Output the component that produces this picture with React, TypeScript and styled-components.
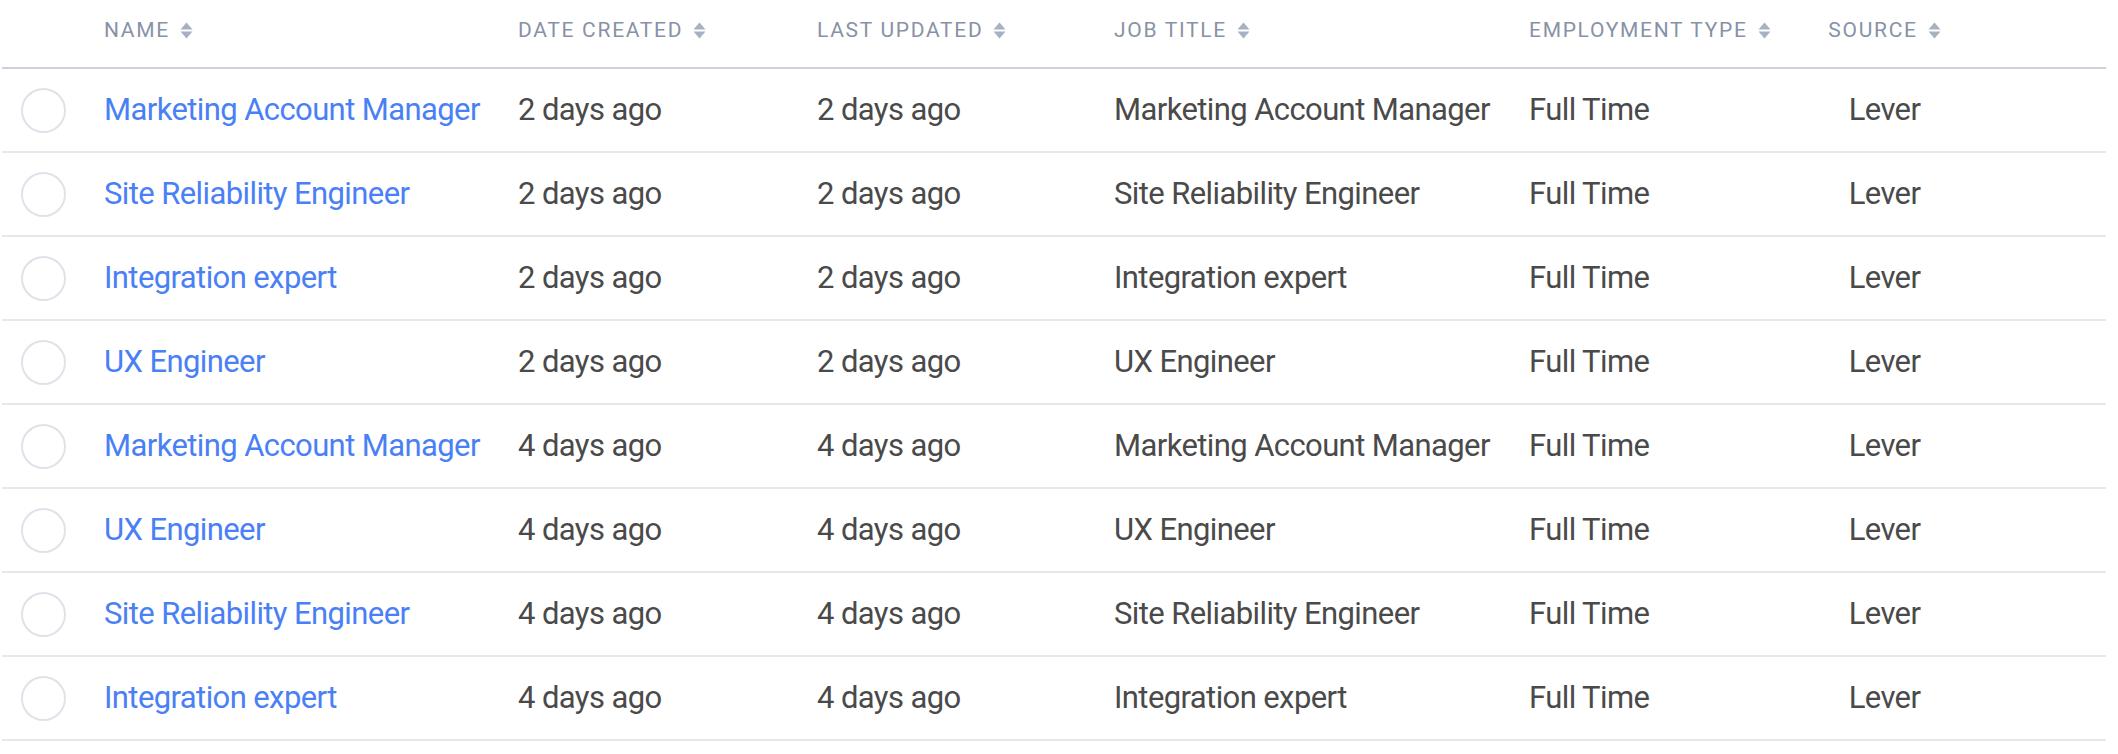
import React from "react";
import styled, { createGlobalStyle } from "styled-components";

const GlobalStyle = createGlobalStyle`
  html, body {
    margin: 0;
    padding: 0;
    background: #ffffff;
  }
  body {
    font-family: Roboto, "Liberation Sans", Arial, sans-serif;
  }
`;

const COLUMNS = "102px 414px 299px 297px 415px 271px 169px 1fr";

const Page = styled.div`
  padding-left: 2px;
  width: 2104px;
`;

const Table = styled.div`
  display: flex;
  flex-direction: column;
  width: 100%;
`;

const HeaderRow = styled.div`
  display: grid;
  grid-template-columns: ${COLUMNS};
  align-items: start;
  padding-top: 18px;
  box-sizing: border-box;
  height: 69px;
  border-bottom: 2px solid #cbd1dd;
`;

const HeadCell = styled.div<{ $center?: boolean }>`
  display: flex;
  align-items: center;
  justify-content: ${(p) => (p.$center ? "center" : "flex-start")};
  gap: 10px;
  font-size: 21px;
  letter-spacing: 1.7px;
  line-height: 24px;
  color: #8892a6;
  text-transform: uppercase;
  white-space: nowrap;
`;

const Row = styled.div`
  display: grid;
  grid-template-columns: ${COLUMNS};
  height: 84px;
  box-sizing: border-box;
  border-bottom: 2px solid #e5e8ef;
  align-items: center;
`;

const Cell = styled.div<{ $center?: boolean }>`
  display: flex;
  align-items: center;
  justify-content: ${(p) => (p.$center ? "center" : "flex-start")};
  font-size: 31px;
  letter-spacing: -0.6px;
  line-height: 36px;
  color: #4a4a4a;
  white-space: nowrap;
`;

const CheckCell = styled.div`
  display: flex;
  align-items: center;
  padding-left: 19px;
`;

const CheckCircle = styled.span`
  display: block;
  width: 45px;
  height: 45px;
  box-sizing: border-box;
  border-radius: 50%;
  border: 2px solid #dfe2e9;
  background: #fff;
`;

const NameLink = styled.a`
  font-size: 31px;
  letter-spacing: -0.6px;
  line-height: 36px;
  color: #4a80f5;
  text-decoration: none;
  white-space: nowrap;
  cursor: pointer;
`;

const SortIconSvg = styled.svg`
  display: block;
  width: 13px;
  height: 17px;
  flex: none;
`;

const SortIcon = () => (
  <SortIconSvg viewBox="0 0 13 17">
    <path d="M6.5 0.5 L12.5 7.5 L0.5 7.5 Z" fill="#a7b1c1" />
    <path d="M6.5 16.5 L12.5 9.5 L0.5 9.5 Z" fill="#a7b1c1" />
  </SortIconSvg>
);

type Job = {
  name: string;
  created: string;
  updated: string;
  title: string;
  type: string;
  source: string;
};

const jobs: Job[] = [
  { name: "Marketing Account Manager", created: "2 days ago", updated: "2 days ago", title: "Marketing Account Manager", type: "Full Time", source: "Lever" },
  { name: "Site Reliability Engineer", created: "2 days ago", updated: "2 days ago", title: "Site Reliability Engineer", type: "Full Time", source: "Lever" },
  { name: "Integration expert", created: "2 days ago", updated: "2 days ago", title: "Integration expert", type: "Full Time", source: "Lever" },
  { name: "UX Engineer", created: "2 days ago", updated: "2 days ago", title: "UX Engineer", type: "Full Time", source: "Lever" },
  { name: "Marketing Account Manager", created: "4 days ago", updated: "4 days ago", title: "Marketing Account Manager", type: "Full Time", source: "Lever" },
  { name: "UX Engineer", created: "4 days ago", updated: "4 days ago", title: "UX Engineer", type: "Full Time", source: "Lever" },
  { name: "Site Reliability Engineer", created: "4 days ago", updated: "4 days ago", title: "Site Reliability Engineer", type: "Full Time", source: "Lever" },
  { name: "Integration expert", created: "4 days ago", updated: "4 days ago", title: "Integration expert", type: "Full Time", source: "Lever" },
];

const headers: { label: string; center?: boolean }[] = [
  { label: "Name" },
  { label: "Date Created" },
  { label: "Last Updated" },
  { label: "Job Title" },
  { label: "Employment Type" },
  { label: "Source", center: true },
];

export default function App() {
  return (
    <>
      <GlobalStyle />
      <Page>
        <Table>
          <HeaderRow>
            <div />
            {headers.map((h) => (
              <HeadCell key={h.label} $center={h.center}>
                <span>{h.label}</span>
                <SortIcon />
              </HeadCell>
            ))}
            <div />
          </HeaderRow>
          {jobs.map((j, i) => (
            <Row key={i}>
              <CheckCell>
                <CheckCircle />
              </CheckCell>
              <Cell>
                <NameLink>{j.name}</NameLink>
              </Cell>
              <Cell>{j.created}</Cell>
              <Cell>{j.updated}</Cell>
              <Cell>{j.title}</Cell>
              <Cell>{j.type}</Cell>
              <Cell $center>{j.source}</Cell>
              <div />
            </Row>
          ))}
        </Table>
      </Page>
    </>
  );
}
